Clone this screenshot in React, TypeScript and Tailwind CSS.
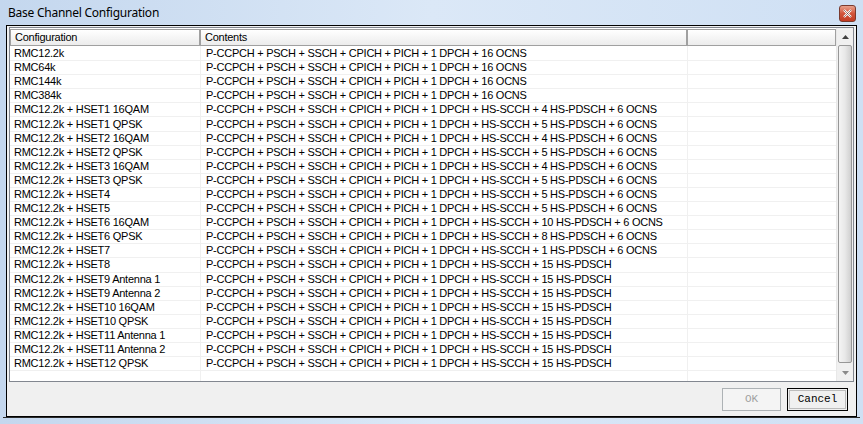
import React from "react";

const BASE = "P-CCPCH + PSCH + SSCH + CPICH + PICH + 1 DPCH";

const rows: [string, string][] = [
  ["RMC12.2k", BASE + " + 16 OCNS"],
  ["RMC64k", BASE + " + 16 OCNS"],
  ["RMC144k", BASE + " + 16 OCNS"],
  ["RMC384k", BASE + " + 16 OCNS"],
  ["RMC12.2k + HSET1 16QAM", BASE + " + HS-SCCH + 4 HS-PDSCH + 6 OCNS"],
  ["RMC12.2k + HSET1 QPSK", BASE + " + HS-SCCH + 5 HS-PDSCH + 6 OCNS"],
  ["RMC12.2k + HSET2 16QAM", BASE + " + HS-SCCH + 4 HS-PDSCH + 6 OCNS"],
  ["RMC12.2k + HSET2 QPSK", BASE + " + HS-SCCH + 5 HS-PDSCH + 6 OCNS"],
  ["RMC12.2k + HSET3 16QAM", BASE + " + HS-SCCH + 4 HS-PDSCH + 6 OCNS"],
  ["RMC12.2k + HSET3 QPSK", BASE + " + HS-SCCH + 5 HS-PDSCH + 6 OCNS"],
  ["RMC12.2k + HSET4", BASE + " + HS-SCCH + 5 HS-PDSCH + 6 OCNS"],
  ["RMC12.2k + HSET5", BASE + " + HS-SCCH + 5 HS-PDSCH + 6 OCNS"],
  ["RMC12.2k + HSET6 16QAM", BASE + " + HS-SCCH + 10 HS-PDSCH + 6 OCNS"],
  ["RMC12.2k + HSET6 QPSK", BASE + " + HS-SCCH + 8 HS-PDSCH + 6 OCNS"],
  ["RMC12.2k + HSET7", BASE + " + HS-SCCH + 1 HS-PDSCH + 6 OCNS"],
  ["RMC12.2k + HSET8", BASE + " + HS-SCCH + 15 HS-PDSCH"],
  ["RMC12.2k + HSET9 Antenna 1", BASE + " + HS-SCCH + 15 HS-PDSCH"],
  ["RMC12.2k + HSET9 Antenna 2", BASE + " + HS-SCCH + 15 HS-PDSCH"],
  ["RMC12.2k + HSET10 16QAM", BASE + " + HS-SCCH + 15 HS-PDSCH"],
  ["RMC12.2k + HSET10 QPSK", BASE + " + HS-SCCH + 15 HS-PDSCH"],
  ["RMC12.2k + HSET11 Antenna 1", BASE + " + HS-SCCH + 15 HS-PDSCH"],
  ["RMC12.2k + HSET11 Antenna 2", BASE + " + HS-SCCH + 15 HS-PDSCH"],
  ["RMC12.2k + HSET12 QPSK", BASE + " + HS-SCCH + 15 HS-PDSCH"],
];

function HeaderCell({ label, width }: { label: string; width: string }) {
  return (
    <div
      className={`${width} h-full flex items-center pl-[4px] border border-[#a0a0a0] bg-gradient-to-b from-[#ffffff] to-[#ececec] shrink-0`}
    >
      {label}
    </div>
  );
}

export default function App() {
  return (
    <div
      className="w-[863px] h-[424px] bg-gradient-to-r from-[#c4d7ee] via-[#dbe8f7] to-[#cfe0f4] relative overflow-hidden text-black"
      style={{ fontFamily: '"Liberation Sans", Arial, sans-serif' }}
    >
      {/* Title bar */}
      <div className="h-[25px] flex items-center pl-[8px] text-[12px] tracking-[-0.25px] font-['Noto_Sans',sans-serif]">
        Base Channel Configuration
      </div>
      <div className="absolute top-[5px] right-[7px] w-[17px] h-[17px] rounded-[3px] border border-[#7a3a2e] bg-gradient-to-b from-[#e8a08c] via-[#d2553b] to-[#c23a22] flex items-center justify-center">
        <svg width="9" height="9" viewBox="0 0 9 9">
          <path d="M1 1 L8 8 M8 1 L1 8" stroke="#ffffff" strokeWidth="2.2" />
          <path d="M1 1 L8 8 M8 1 L1 8" stroke="#5a2a20" strokeWidth="0.6" />
        </svg>
      </div>

      {/* Client area */}
      <div className="mx-[6px] h-[392px] border border-black bg-[#f0f0f0] flex flex-col">
        {/* List view */}
        <div className="mx-[2px] mt-[1px] h-[355px] border border-[#828790] bg-white flex text-[11px] tracking-[-0.25px]">
          <div className="flex-1 flex flex-col overflow-hidden">
            <div className="h-[17px] flex shrink-0 mt-[1px]">
              <HeaderCell label="Configuration" width="w-[190px]" />
              <HeaderCell label="Contents" width="w-[487px]" />
              <HeaderCell label="" width="flex-1" />
            </div>
            <div className="relative flex-1 pt-[1px]">
              <div className="absolute top-0 bottom-0 left-[190px] w-px bg-[#f0f0f0]" />
              <div className="absolute top-0 bottom-0 left-[677px] w-px bg-[#f0f0f0]" />
              {rows.map(([cfg, contents], i) => (
                <div
                  key={i}
                  className="h-[14.1px] flex items-center border-b border-[#f0f0f0] leading-none"
                >
                  <div className="w-[190px] pl-[4px] whitespace-nowrap">{cfg}</div>
                  <div className="pl-[6px] whitespace-nowrap">{contents}</div>
                </div>
              ))}
              <div className="h-[14px] border-b border-[#f0f0f0]" />
            </div>
          </div>
          {/* Scrollbar */}
          <div className="w-[17px] flex flex-col bg-[#f0f0f0] border-l border-[#e8e8e8]">
            <div className="h-[17px] flex items-center justify-center">
              <svg width="7" height="4" viewBox="0 0 7 4">
                <path d="M0 4 L3.5 0 L7 4 Z" fill="#404040" />
              </svg>
            </div>
            <div className="flex-1 mx-[1px] rounded-[2px] border border-[#979797] bg-gradient-to-r from-[#f4f4f4] via-[#e8e8e8] to-[#cfcfcf] mb-[1px]" />
            <div className="h-[17px] flex items-center justify-center">
              <svg width="7" height="4" viewBox="0 0 7 4">
                <path d="M0 0 L7 0 L3.5 4 Z" fill="#8a8a8a" />
              </svg>
            </div>
          </div>
        </div>

        {/* Buttons */}
        <div className="flex-1 flex items-center justify-end gap-[6px] pr-[8px] text-[11px] font-['Liberation_Mono',monospace]">
          <div className="w-[59px] h-[23px] border border-[#adb2b5] bg-[#f4f4f4] text-[#a0a0a0] flex items-center justify-center">
            OK
          </div>
          <div className="w-[61px] h-[23px] border border-black bg-[#f0f0f0] flex items-center justify-center">
            <div className="w-[57px] h-[19px] border border-[#bcbcbc] flex items-center justify-center">
              Cancel
            </div>
          </div>
        </div>
      </div>
      <div className="ml-[3px] mr-[3px] h-px bg-[#2a2a2a]" />
    </div>
  );
}
